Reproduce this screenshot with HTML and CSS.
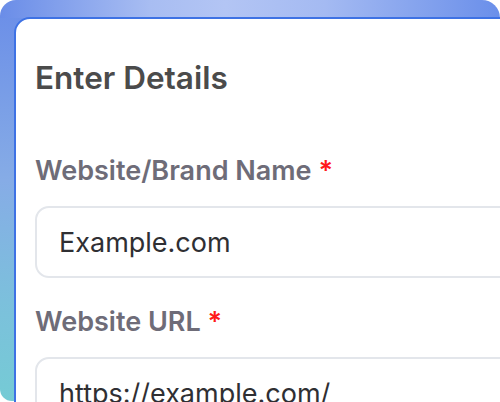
FILE: index.html
```html
<!DOCTYPE html>
<html lang="en">
<head>
<meta charset="utf-8">
<title>Enter Details</title>
<link rel="stylesheet" href="styles.css">
</head>
<body>
<div class="frame">
  <section class="card">
    <h1 class="title">Enter Details</h1>
    <div class="field">
      <label class="label" for="brand">Website/Brand Name <span class="req">*</span></label>
      <div class="input" id="brand">Example.com</div>
    </div>
    <div class="field">
      <label class="label" for="url">Website URL <span class="req">*</span></label>
      <div class="input" id="url">https://example.com/</div>
    </div>
  </section>
</div>
</body>
</html>
```

FILE: styles.css
```css
html, body {
  margin: 0;
  padding: 0;
  overflow: hidden;
  background: #ffffff;
}
body {
  width: 500px;
  height: 402px;
  font-family: "Inter", "Lato", sans-serif;
}
.frame {
  box-sizing: border-box;
  width: 500px;
  height: 401px;
  padding: 17px 0 0 14px;
  border-radius: 16px 18px 12px 12px;
  background:
    linear-gradient(90deg, #6a8de8 0%, #a8bdf2 30%, #b3c5f4 45%, #a4baf2 65%, #6a8fea 100%) top left / 100% 18px no-repeat,
    linear-gradient(180deg, #6a8de8 0%, #86ace6 45%, #7cc0dc 75%, #75cbd5 100%);
}
.card {
  box-sizing: border-box;
  width: 540px;
  height: 430px;
  background: #ffffff;
  border: 2px solid #3e72e4;
  border-radius: 16px 0 0 0;
  padding: 39px 0 0 19px;
}
.title {
  margin: 0;
  font-size: 31.5px;
  line-height: 40px;
  font-weight: 600;
  color: #4b4b4b;
}
.field {
  display: flex;
  flex-direction: column;
  gap: 19px;
  margin-top: 28px;
}
.title + .field {
  margin-top: 57px;
}
.label {
  font-size: 27px;
  line-height: 32px;
  font-weight: 600;
  color: #6e6c78;
}
.req {
  color: #ff1a1a;
}
.input {
  box-sizing: border-box;
  height: 72px;
  display: flex;
  align-items: center;
  padding-left: 22px;
  border: 2px solid #e3e6eb;
  border-radius: 14px;
  font-size: 27px;
  color: #2f2f33;
}
```
